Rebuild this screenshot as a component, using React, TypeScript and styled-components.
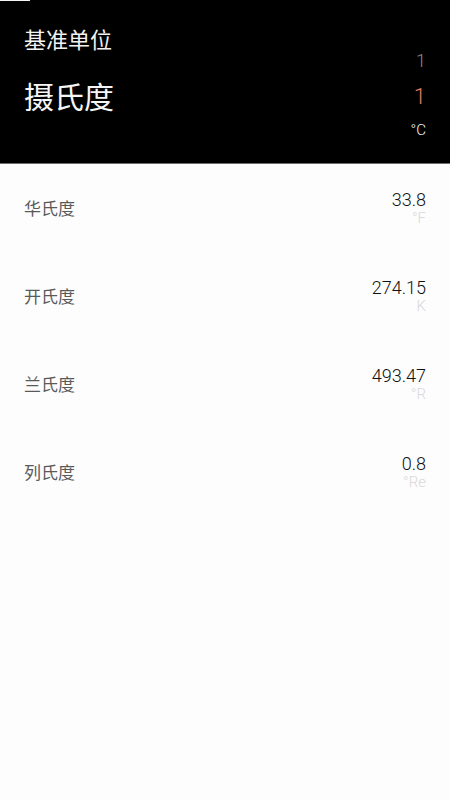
import React from "react";
import styled, { createGlobalStyle } from "styled-components";

const Global = createGlobalStyle`
  html, body { margin: 0; padding: 0; background: #fdfdfd; }
  body { font-family: Roboto, "Noto Sans CJK SC", sans-serif; }
`;

const Page = styled.div`
  position: relative;
  width: 450px;
  min-height: 800px;
  background: #fdfdfd;
`;

const Sliver = styled.div`
  position: absolute;
  left: 0;
  top: 0;
  width: 30px;
  height: 1px;
  background: #f4f4f4;
`;

const Header = styled.header`
  display: flex;
  justify-content: space-between;
  height: 163px;
  padding: 0 24px;
  background: #000;
  border-bottom: 1px solid #6e6e6e;
`;

const LeftCol = styled.div`
  display: flex;
  flex-direction: column;
`;

const Title = styled.div`
  margin-top: 27px;
  font-family: "Noto Sans CJK SC", sans-serif;
  font-size: 22px;
  line-height: 22px;
  color: #f2f2f2;
`;

const BaseName = styled.div`
  margin-top: 31px;
  font-family: "Noto Sans CJK SC", sans-serif;
  font-size: 30px;
  line-height: 30px;
  color: #f5f5f5;
`;

const RightCol = styled.div`
  display: flex;
  flex-direction: column;
  align-items: flex-end;
  margin-top: 52px;
  font-family: Roboto, sans-serif;
  font-weight: 300;
`;

const Input = styled.div`
  font-size: 18px;
  line-height: 18px;
  color: #8a8a8a;
`;

const Result = styled.div`
  margin-top: 16px;
  font-size: 22px;
  line-height: 22px;
  color: #e27766;
`;

const BaseUnit = styled.div`
  margin-top: 15px;
  font-size: 15px;
  line-height: 15px;
  color: #f2f2f2;
`;

const List = styled.div`
  display: flex;
  flex-direction: column;
`;

const Row = styled.div`
  display: flex;
  align-items: center;
  justify-content: space-between;
  height: 88px;
  padding: 0 24px;
`;

const Label = styled.div`
  font-family: "Noto Sans CJK SC", sans-serif;
  font-size: 17px;
  line-height: 20px;
  color: #5a5a5a;
`;

const Values = styled.div`
  display: flex;
  flex-direction: column;
  align-items: flex-end;
  font-family: Roboto, sans-serif;
  font-weight: 300;
`;

const Value = styled.div`
  font-size: 18px;
  line-height: 20px;
  color: #111;
`;

const Unit = styled.div`
  font-size: 15px;
  line-height: 16px;
  color: #d8d8d8;
`;

const rows = [
  { name: "华氏度", value: "33.8", unit: "°F" },
  { name: "开氏度", value: "274.15", unit: "K" },
  { name: "兰氏度", value: "493.47", unit: "°R" },
  { name: "列氏度", value: "0.8", unit: "°Re" },
];

export default function App() {
  return (
    <Page>
      <Global />
      <Header>
        <LeftCol>
          <Title>基准单位</Title>
          <BaseName>摄氏度</BaseName>
        </LeftCol>
        <RightCol>
          <Input>1</Input>
          <Result>1</Result>
          <BaseUnit>°C</BaseUnit>
        </RightCol>
      </Header>
      <List>
        {rows.map((r) => (
          <Row key={r.name}>
            <Label>{r.name}</Label>
            <Values>
              <Value>{r.value}</Value>
              <Unit>{r.unit}</Unit>
            </Values>
          </Row>
        ))}
      </List>
      <Sliver />
    </Page>
  );
}
